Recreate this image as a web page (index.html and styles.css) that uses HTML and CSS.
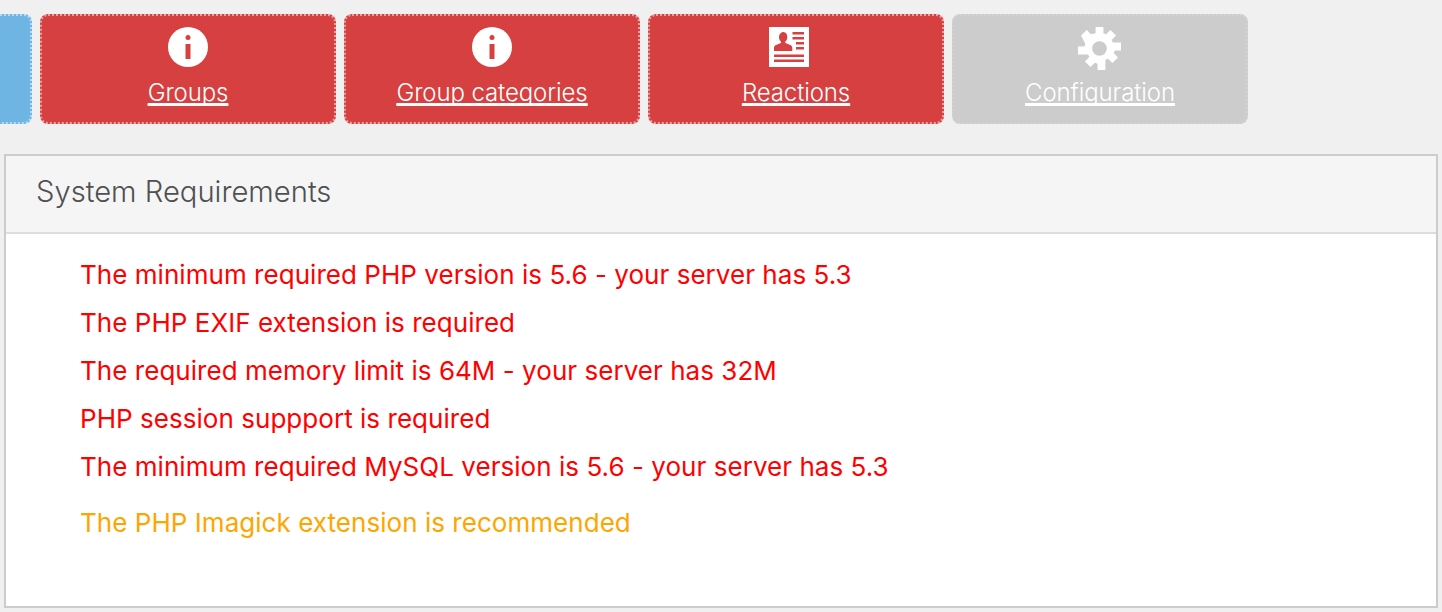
FILE: index.html
```html
<!DOCTYPE html>
<html lang="en">
<head>
<meta charset="utf-8">
<title>System Requirements</title>
<link rel="stylesheet" href="styles.css">
</head>
<body>
<nav class="tiles">
  <a class="tile tile-blue" href="#"><span class="tile-icon"></span><span class="tile-label">&nbsp;</span></a>
  <a class="tile tile-red" href="#">
    <svg class="tile-icon" viewBox="0 0 40 40"><circle cx="20" cy="20" r="20" fill="#fff"/><circle cx="20" cy="10.500" r="2.500" fill="#d64041"/><rect x="17.500" y="17" width="5" height="15" fill="#d64041"/></svg>
    <span class="tile-label">Groups</span>
  </a>
  <a class="tile tile-red" href="#">
    <svg class="tile-icon" viewBox="0 0 40 40"><circle cx="20" cy="20" r="20" fill="#fff"/><circle cx="20" cy="10.500" r="2.500" fill="#d64041"/><rect x="17.500" y="17" width="5" height="15" fill="#d64041"/></svg>
    <span class="tile-label">Group categories</span>
  </a>
  <a class="tile tile-red" href="#">
    <svg class="tile-icon tile-card" viewBox="0 0 40 40"><rect width="40" height="40" fill="#fff"/><path fill="#d64041" d="M14.500 5c2.300 0 3.800 2.200 3.800 5 0 2-.8 3.700-2 4.500v1.500l5 2c1.300.6 2 1.600 2 3v3H5v-3c0-1.400.7-2.400 2-3l5-2v-1.500c-1.200-.8-2-2.500-2-4.500 0-2.800 2.200-5 4.500-5zM23.500 5H35v2.500H23.500zM23.500 10H35v2.500H23.500zM27 15h8v2.500h-8zM27 20h8v2.500h-8zM5 27.500h30V30H5zM5 32.500h30V35H5z"/></svg>
    <span class="tile-label">Reactions</span>
  </a>
  <a class="tile tile-grey" href="#">
    <svg class="tile-icon tile-gear" viewBox="0 0 44 44"><path fill="#fff" fill-rule="evenodd" d="M18 0h8v6.300l2.700 1.100 4.500-4.400 5.700 5.700-4.400 4.500 1.100 2.700H44v8.100h-6.400l-1.100 2.700 4.400 4.500-5.700 5.700-4.500-4.400-2.700 1.100V44h-8v-6.300l-2.700-1.100-4.500 4.400-5.700-5.700 4.400-4.500-1.100-2.700H0v-8.100h6.400l1.100-2.700L3.100 8.700 8.800 3l4.500 4.400L18 6.300zM22 14.500a7.500 7.500 0 1 0 0 15 7.500 7.500 0 0 0 0-15z"/></svg>
    <span class="tile-label">Configuration</span>
  </a>
</nav>
<section class="panel">
  <h2 class="panel-title">System Requirements</h2>
  <div class="panel-body">
    <p class="req req-error">The minimum required PHP version is 5.6 - your server has 5.3</p>
    <p class="req req-error">The PHP EXIF extension is required</p>
    <p class="req req-error">The required memory limit is 64M - your server has 32M</p>
    <p class="req req-error">PHP session suppport is required</p>
    <p class="req req-error">The minimum required MySQL version is 5.6 - your server has 5.3</p>
    <p class="req req-warning">The PHP Imagick extension is recommended</p>
  </div>
</section>
</body>
</html>
```
FILE: styles.css
```css
* { box-sizing: border-box; }
html, body { height: 100%; }
body {
  margin: 0;
  background: #f0f0f0;
  font-family: Inter, "Liberation Sans", sans-serif;
  overflow: hidden;
}
.tiles {
  display: flex;
  gap: 8px;
  margin-left: -264px;
  padding-top: 14px;
}
.tile {
  flex: 0 0 296px;
  height: 110px;
  border-radius: 8px;
  border: 2px dotted rgba(255, 255, 255, 0.5);
  color: #fff;
  display: flex;
  flex-direction: column;
  align-items: center;
  padding-top: 11px;
  font-size: 24px;
  font-weight: 300;
  letter-spacing: -0.1px;
  line-height: 30px;
}
.tile-blue { background-color: #6fb5e3; }
.tile-red { background-color: #d64041; }
.tile-grey { background-color: #cccccc; border-color: rgba(255, 255, 255, 0.12); }
.tile-icon { display: block; width: 40px; height: 40px; flex: none; }
.tile-card { margin-right: 14px; }
.tile-gear { width: 43px; height: 43px; margin: 0 2px -3px 0; }
.tile-label {
  margin-top: 11px;
  text-decoration: underline;
  text-decoration-thickness: 2px;
  text-decoration-skip-ink: none;
  text-underline-offset: 3px;
}
.panel {
  margin: 30px 4px 0;
  height: 454px;
  border: 2px solid #cccccc;
  background: #fff;
}
.panel-title {
  margin: 0;
  height: 78px;
  padding: 0 30px 6px;
  display: flex;
  align-items: center;
  background: #f5f5f5;
  border-bottom: 2px solid #dddddd;
  color: #505050;
  font-size: 29.200px;
  font-weight: 300;
}
.panel-body { padding: 17px 75px; }
.req { margin: 0 0 0 -1px; font-size: 26px; font-weight: 400; letter-spacing: 0.04px; line-height: 48px; }
.req-error { color: #ff0000; }
.req-warning { color: #ffa500; margin-top: 8px; }
```
